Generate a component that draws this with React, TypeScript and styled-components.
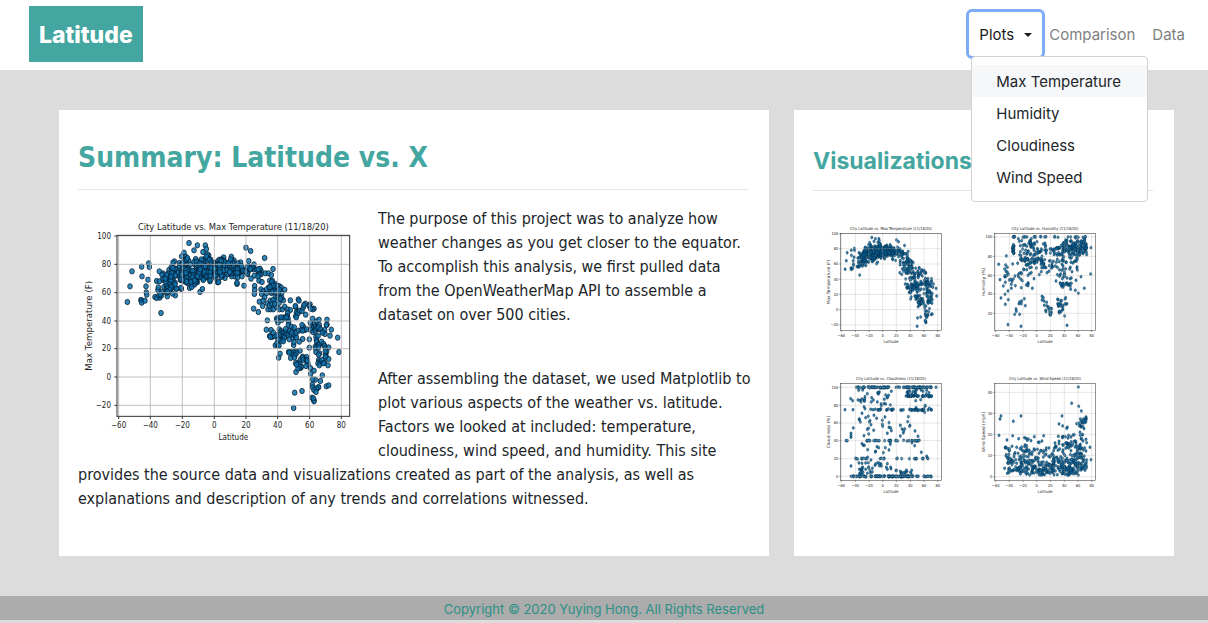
import React from "react";
import styled, { createGlobalStyle } from "styled-components";

const teal = "#44a6a0";
const ui = `Inter, "Liberation Sans", sans-serif`;
const reading = `"DejaVu Sans Condensed", "DejaVu Sans", sans-serif`;

const GlobalStyle = createGlobalStyle`
  *, *::before, *::after { box-sizing: border-box; }
  body { margin: 0; background: #dcdcdc; color: #212529; font: 15px/24px ${ui}; }
`;

const Navbar = styled.header`
  display: flex;
  align-items: center;
  justify-content: space-between;
  min-height: 70px;
  padding: 6px 15px 8px 29px;
  background: #fff;
`;

const Brand = styled.a`
  padding: 11px 10px 9px;
  background: ${teal};
  color: #fff;
  font-size: 23px;
  font-weight: 800;
  line-height: 36px;
  text-decoration: none;
`;

const NavList = styled.ul`
  display: flex;
  gap: 1px;
  margin: 0;
  padding: 0;
  list-style: none;
`;

const NavItem = styled.li`
  position: relative;
`;

const NavLink = styled.a`
  display: block;
  padding: 9px 8px 7px;
  color: #808080;
  text-decoration: none;
`;

const NavToggle = styled.button`
  display: flex;
  align-items: center;
  gap: 10px;
  padding: 9px 8px 7px;
  border: 0;
  border-radius: 1px;
  outline: 3px solid #7eabf5;
  outline-offset: 2px;
  background: none;
  color: #1a1a1a;
  font: inherit;
`;

const Caret = styled.span`
  border: 4px solid transparent;
  border-top-color: currentColor;
  border-bottom: 0;
`;

const Menu = styled.ul`
  position: absolute;
  z-index: 1;
  top: calc(100% + 2px);
  left: 0;
  min-width: 177px;
  margin: 0;
  padding: 8px 0;
  border: 1px solid #d2d2d2;
  border-radius: 4px;
  background: #fff;
  list-style: none;
`;

const MenuLink = styled.a<{ $active?: boolean }>`
  display: block;
  padding: 5px 24px 3px;
  background: ${(p) => (p.$active ? "#f6f7f9" : "transparent")};
  color: #212529;
  text-decoration: none;
  white-space: nowrap;
`;

const Page = styled.main`
  display: grid;
  grid-template-columns: 71fr 38fr;
  gap: 25px;
  padding: 40px 34px 40px 59px;
`;

const Card = styled.section`
  min-width: 0;
  padding: 27px 21px 29px 19px;
  background: #fff;
`;

const Title = styled.h1`
  margin: 0 0 17px;
  padding: 1px 0 11px;
  border-bottom: 1px solid #e5e5e5;
  color: ${teal};
  font: 700 28px/40px ${reading};
`;

const SideTitle = styled.h2`
  margin: 0 0 29px;
  padding: 8px 0 13px;
  border-bottom: 1px solid #e5e5e5;
  color: ${teal};
  font: 700 23px/32px ${ui};
`;

const Summary = styled.div`
  margin-right: -8px;
  font-family: ${reading};
  font-size: 16px;

  & > svg {
    float: left;
    margin: 3px 20px 0 0;
  }
`;

const Paragraph = styled.p`
  margin: 0 0 40px;

  &:last-child { margin-bottom: 16px; }
`;

const Gallery = styled.div`
  display: grid;
  grid-template-columns: repeat(auto-fill, 130px);
  gap: 20px 25px;
  padding-left: 7px;
`;

const PlotLink = styled.a`
  display: block;
  height: 130px;
`;

const Footer = styled.footer`
  margin-bottom: 3px;
  padding-top: 2px;
  background: #acacac;
  color: #2b9087;
  font-size: 13px;
  line-height: 22px;
  text-align: center;
`;

const PlotSvg = styled.svg`
  display: block;
  font-family: ${reading};
  fill: #222;
`;

type Point = [number, number];
// x start, x end, y at start, y at end, vertical spread, number of cities
type Band = [number, number, number, number, number, number];
type Frame = { l: number; t: number; r: number; b: number };

function random(seed: number) {
  let a = seed;
  return () => {
    a = (a + 0x6d2b79f5) | 0;
    let t = Math.imul(a ^ (a >>> 15), 1 | a);
    t = (t + Math.imul(t ^ (t >>> 7), 61 | t)) ^ t;
    return ((t ^ (t >>> 14)) >>> 0) / 4294967296;
  };
}

function scatter(seed: number, loose: Point[], bands: Band[]): Point[] {
  const next = random(seed);
  const out = [...loose];
  bands.forEach(([x0, x1, y0, y1, spread, n]) => {
    for (let i = 0; i < n; i++) {
      const t = next();
      const noise = (next() * 1.4 + next() * 0.6 - 1) * spread;
      out.push([Math.round(x0 + (x1 - x0) * t), Math.round(y0 + (y1 - y0) * t + noise)]);
    }
  });
  return out;
}

const temperature = scatter(
  7,
  [
    [148,276],[156,229],[162,184],[191,170],[192,199],[212,160],[214,171],[210,209],[204,229],[205,247],
    [206,254],[189,270],[190,271],[191,278],[201,272],[231,261],[245,263],[249,309],[244,184],[273,180],
    [289,154],[292,256],[296,236],[310,237],[318,128],[323,140],[311,139],[333,99],[348,121],[358,106],
    [375,126],[382,106],[385,117],[392,136],[366,246],[373,237],[419,217],[422,216],[437,142],[460,140],
    [477,222],[477,218],[498,227],[504,113],[518,123],[512,153],[560,144],[585,177],[529,252],
    // falling side, 25° N and up
    [527,296],[541,306],[544,275],[554,288],[530,228],[530,240],[543,212],[552,216],[545,190],[562,190],
    [571,190],[580,195],[549,238],[556,243],[565,250],[551,252],[575,212],[583,212],[590,226],[597,227],
    [603,228],[609,232],[620,239],[605,240],[611,250],[598,251],[588,238],[580,232],[572,232],[566,238],
    [577,240],[584,246],[592,262],[600,263],[609,266],[616,271],[603,279],[594,272],[560,262],[555,272],
    [568,280],[577,272],[585,270],[570,298],[578,298],[586,298],[596,291],[604,298],[613,298],[574,287],
    [582,282],[590,282],[620,290],[629,298],[637,271],[661,268],[663,272],[682,281],[696,283],[708,296],
    [704,298],[683,314],[653,291],[652,288],[658,305],[655,308],[653,319],[660,310],[665,302],[672,303],
    [676,292],[678,285],[694,288],[698,296],[637,300],[629,309],[655,322],
    [568,331],[565,359],[579,360],[600,338],[596,325],[604,324],[611,330],[618,322],[628,318],[630,325],
    [620,325],[632,335],[631,345],[609,322],[597,330],[625,322],
    [575,378],[582,381],[577,381],[590,378],[586,368],[604,358],[609,363],[606,368],[612,370],[618,367],
    [624,365],[630,368],[635,362],[640,350],[645,359],[638,375],[628,376],[620,378],[612,380],[606,382],
    [603,375],[614,389],[619,384],[608,392],[600,388],[616,394],[596,376],[634,388],[645,384],[652,378],
    [655,382],[647,372],[641,368],[623,357],[592,406],[600,405],[597,400],[603,407],[602,443],[606,431],
    [647,405],[648,396],[664,395],[674,387],[694,388],[694,413],[666,422],[653,423],
    [632,426],[640,426],[648,427],[655,430],[638,444],[645,434],[651,436],[634,428],[649,443],[654,486],
    [668,474],[660,458],[666,463],[670,470],[664,470],[660,476],[653,460],[656,464],[668,448],[674,440],
    [679,445],[673,444],[676,450],[686,441],[688,455],[685,450],[690,462],[684,468],[688,452],[697,474],
    [698,491],[708,482],[649,352],[655,368],[662,362],[670,360],[676,350],[672,345],[680,360],[686,358],
    [674,362],
    [697,338],[704,326],[710,340],[716,334],[723,329],[747,329],[747,344],[745,345],[700,350],[706,352],
    [712,350],[718,352],[724,345],[703,358],[698,360],[705,366],[712,362],[720,358],[717,354],[722,352],
    [728,358],[734,366],[740,360],[741,372],[733,368],[760,359],[756,377],[779,383],[783,426],[714,380],
    [720,378],[715,390],[716,396],[712,410],[720,405],[713,415],[724,404],[731,395],[737,402],[740,408],
    [743,415],[752,412],[746,425],[743,435],[742,424],[714,426],[722,412],[725,430],[722,450],[725,455],
    [720,460],[728,460],[724,466],[732,450],[739,458],[737,460],[744,440],[752,447],[750,466],[742,440],
    [722,434],
    [727,513],[733,496],[745,529],[752,526],[720,533],[722,531],[712,509],[704,508],[703,524],[704,532],
    [716,535],[708,540],[714,546],[702,563],[708,571],[708,574],[706,565],[672,543],[650,548],[647,594],
  ],
  [
    [235,290,228,212,44,42],
    [275,335,202,185,46,60],
    [310,400,190,168,44,85],
    [320,400,212,205,28,26],
    [355,490,176,174,32,125],
    [490,550,178,192,26,28],
    [575,612,235,250,24,16],
  ],
);

const humidity = scatter(
  21,
  [
    [71,133],[75,179],[78,234],[91,253],[89,147],[99,213],[100,239],[99,314],[138,319],[276,316],
    [348,83],[347,162],[310,220],[328,205],[301,211],[119,283],[134,283],[151,257],[269,288],[90,223],
    [90,171],[97,157],[201,229],[205,233],[201,240],[207,243],[303,181],[318,170],
  ],
  [
    [112,120,51,51,2,5],[140,185,51,51,2,6],[195,335,51,51,2,15],
    [112,118,85,90,26,16],
    [130,215,85,85,36,62],
    [135,215,122,122,14,44],
    [120,220,148,150,24,26],
    [85,180,178,190,32,22],
    [225,335,96,88,20,90],
    [262,335,72,74,22,62],
    [220,310,135,130,32,44],
    [240,290,175,185,42,34],
    [248,276,252,258,34,24],
    [205,230,258,276,20,16],
    [120,150,268,235,20,7],
    [88,115,150,130,38,8],
  ],
);

const cloudiness = scatter(
  33,
  [
    [75,119],[99,119],[78,212],[82,212],[92,86],[98,92],[348,52],[100,174],[93,190],[93,197],
    [93,288],[93,202],[130,226],[304,247],[320,259],[322,264],[265,140],[263,155],[118,149],[270,166],
    [241,166],[246,177],
  ],
  [
    [107,207,52,52,1,36],[226,240,52,52,1,3],[248,336,52,52,1,38],
    [262,336,78,78,2,30],
    [140,240,119,119,2,16],[240,336,119,119,2,26],
    [137,152,212,212,1,5],[160,300,212,212,1,26],
    [100,150,266,266,1,8],[165,330,266,266,1,15],
    [92,195,319,319,1,34],[203,290,319,319,1,46],[290,336,319,319,1,11],
    [110,215,80,88,34,34],
    [255,335,66,66,14,24],
    [115,215,155,165,46,24],
    [115,212,270,240,52,26],
    [115,160,302,302,16,14],
    [165,215,290,290,28,10],
    [215,275,308,308,10,14],
    [235,300,190,200,36,9],
    [285,335,100,125,22,10],
  ],
);

const wind = scatter(
  45,
  [
    [310,51],[290,100],[311,109],[319,123],[72,196],[75,147],[78,138],[115,154],[138,138],[96,210],
    [91,232],[91,234],[113,197],[261,138],[252,162],[263,168],[277,172],[305,161],[348,269],[345,232],
    [89,295],[97,310],[131,206],[148,203],[153,205],[168,212],[178,200],[206,197],[275,175],
  ],
  [
    [98,215,284,288,32,74],
    [92,215,252,252,34,56],
    [125,215,228,225,24,14],
    [130,222,302,302,16,52],
    [220,335,286,284,32,105],
    [250,325,302,302,16,38],
    [222,335,255,248,38,80],
    [240,335,215,208,32,36],
    [312,335,162,158,22,20],
  ],
);

interface PlotProps {
  title: string;
  yLabel: string;
  points: Point[];
  width: number;
  height: number;
  frame: Frame;
  xTicks: number[];
  yTicks: [number, string][];
  fontSize: number;
  titleSize: number;
  sideSize: number;
  dot: Point;
  source?: Frame;
}

const xNames = ["−60", "−40", "−20", "0", "20", "40", "60", "80"];

/* Drawn in units of a third of a pixel, so that marks can be placed finely. */
function Plot(p: PlotProps) {
  const { l, t, r, b } = p.frame;
  const s = p.source ?? p.frame;
  const mid = (l + r) / 2;
  const place = ([x, y]: Point): Point => [
    l + ((x - s.l) * (r - l)) / (s.r - s.l),
    t + ((y - s.t) * (b - t)) / (s.b - s.t),
  ];
  const big = p.fontSize > 18;
  return (
    <PlotSvg
      width={p.width}
      height={p.height}
      viewBox={`0 0 ${p.width * 3} ${p.height * 3}`}
      role="img"
      aria-label={p.title}
    >
      <g fill="#0b70ac" fillOpacity={0.84} stroke="#04192a" strokeWidth={big ? 2.2 : 1.1}>
        {p.points.map((pt, i) => {
          const [x, y] = place(pt);
          return <ellipse key={i} cx={x} cy={y} rx={p.dot[0]} ry={p.dot[1]} />;
        })}
      </g>
      <g stroke="#b0b0b0" strokeWidth={big ? 3 : 1.6} strokeOpacity={big ? 0.8 : 0.6}>
        {p.xTicks.map((x) => <line key={x} x1={x} x2={x} y1={t} y2={b} />)}
        {p.yTicks.map(([y]) => <line key={y} x1={l} x2={r} y1={y} y2={y} />)}
      </g>
      <g stroke="#333" strokeWidth={big ? 3 : 1.6} fill="none">
        <rect x={l} y={t} width={r - l} height={b - t} />
        {p.xTicks.map((x) => <line key={x} x1={x} x2={x} y1={b} y2={b + (big ? 8 : 4)} />)}
        {p.yTicks.map(([y]) => <line key={y} x1={l - (big ? 8 : 4)} x2={l} y1={y} y2={y} />)}
      </g>
      <g fontSize={p.fontSize}>
        {p.xTicks.map((x, i) => (
          <text key={x} x={x} y={b + (big ? 36 : 20)} textAnchor="middle">{xNames[i]}</text>
        ))}
        {p.yTicks.map(([y, name]) => (
          <text key={y} x={l - (big ? 18 : 7)} y={y + (big ? 8 : 4)} textAnchor="end">{name}</text>
        ))}
        <text x={mid} y={b + (big ? 71 : 38)} textAnchor="middle">Latitude</text>
      </g>
      <text
        transform={`translate(${big ? 43 : 31} ${(t + b) / 2}) rotate(-90)`}
        fontFamily="DejaVu Sans, sans-serif"
        fontSize={p.sideSize}
        textAnchor="middle"
      >
        {p.yLabel}
      </text>
      <text x={mid} y={t - (big ? 17 : 11)} fontSize={p.titleSize} textAnchor="middle">{p.title}</text>
    </PlotSvg>
  );
}

const leftFrame: Frame = { l: 62, t: 40, r: 364, b: 332 };
const rightFrame: Frame = { l: 59, t: 40, r: 361, b: 332 };
const bigFrame: Frame = { l: 117, t: 76, r: 815, b: 619 };
const leftTicks = [64, 106, 147, 188, 229, 271, 312, 353];
const rightTicks = [62, 103, 144, 185, 226, 268, 309, 350];
const thumb = {
  width: 130,
  height: 130,
  fontSize: 12,
  titleSize: 12,
  sideSize: 13,
  dot: [3.4, 4.4] as Point,
};

const thumbs: PlotProps[] = [
  {
    ...thumb, title: "City Latitude vs. Max Temperature (11/18/20)", yLabel: "Max Temperature (F)",
    points: temperature, source: bigFrame, frame: leftFrame, xTicks: leftTicks,
    yTicks: [[41, "100"], [86, "80"], [132, "60"], [178, "40"], [223, "20"], [269, "0"], [315, "−20"]],
  },
  {
    ...thumb, title: "City Latitude vs. Humidity (11/18/20)", yLabel: "Humidity (%)",
    points: humidity, frame: rightFrame, xTicks: rightTicks,
    yTicks: [[51, "100"], [109, "80"], [166, "60"], [222, "40"], [280, "20"]],
  },
  {
    ...thumb, title: "City Latitude vs. Cloudiness (11/18/20)", yLabel: "Cloudiness (%)",
    points: cloudiness, frame: leftFrame, xTicks: leftTicks,
    yTicks: [[52, "100"], [106, "80"], [159, "60"], [212, "40"], [266, "20"], [319, "0"]],
  },
  {
    ...thumb, title: "City Latitude vs. Wind Speed (11/18/20)", yLabel: "Wind Speed (mph)",
    points: wind, frame: rightFrame, xTicks: rightTicks,
    yTicks: [[67, "40"], [130, "30"], [193, "20"], [256, "10"], [320, "0"]],
  },
];

const plots = ["Max Temperature", "Humidity", "Cloudiness", "Wind Speed"];

export default function App() {
  return (
    <>
      <GlobalStyle />
      <Navbar>
        <Brand href="#home">Latitude</Brand>
        <nav>
          <NavList>
            <NavItem>
              <NavToggle type="button" aria-haspopup="true" aria-expanded="true">
                Plots <Caret />
              </NavToggle>
              <Menu>
                {plots.map((name, i) => (
                  <li key={name}>
                    <MenuLink href="#plot" $active={i === 0}>{name}</MenuLink>
                  </li>
                ))}
              </Menu>
            </NavItem>
            <NavItem><NavLink href="#comparison">Comparison</NavLink></NavItem>
            <NavItem><NavLink href="#data">Data</NavLink></NavItem>
          </NavList>
        </nav>
      </Navbar>
      <Page>
        <Card>
          <Title>Summary: Latitude vs. X</Title>
          <Summary>
            <Plot
              title="City Latitude vs. Max Temperature (11/18/20)"
              yLabel="Max Temperature (F)"
              points={temperature}
              width={280}
              height={240}
              frame={bigFrame}
              xTicks={[122, 217, 313, 409, 504, 599, 695, 790]}
              yTicks={[[78, "100"], [163, "80"], [248, "60"], [333, "40"], [416, "20"], [501, "0"], [586, "−20"]]}
              fontSize={24}
              titleSize={28}
              sideSize={26}
              dot={[7, 8]}
            />
            <Paragraph>
              The purpose of this project was to analyze how weather changes as you get closer to the
              equator. To accomplish this analysis, we first pulled data from the OpenWeatherMap API to
              assemble a dataset on over 500 cities.
            </Paragraph>
            <Paragraph>
              After assembling the dataset, we used Matplotlib to plot various aspects of the weather
              vs. latitude. Factors we looked at included: temperature, cloudiness, wind speed, and
              humidity. This site provides the source data and visualizations created as part of the
              analysis, as well as explanations and description of any trends and correlations
              witnessed.
            </Paragraph>
          </Summary>
        </Card>
        <Card>
          <SideTitle>Visualizations</SideTitle>
          <Gallery>
            {thumbs.map((t) => (
              <PlotLink key={t.title} href="#plot"><Plot {...t} /></PlotLink>
            ))}
          </Gallery>
        </Card>
      </Page>
      <Footer>Copyright © 2020 Yuying Hong. All Rights Reserved</Footer>
    </>
  );
}
